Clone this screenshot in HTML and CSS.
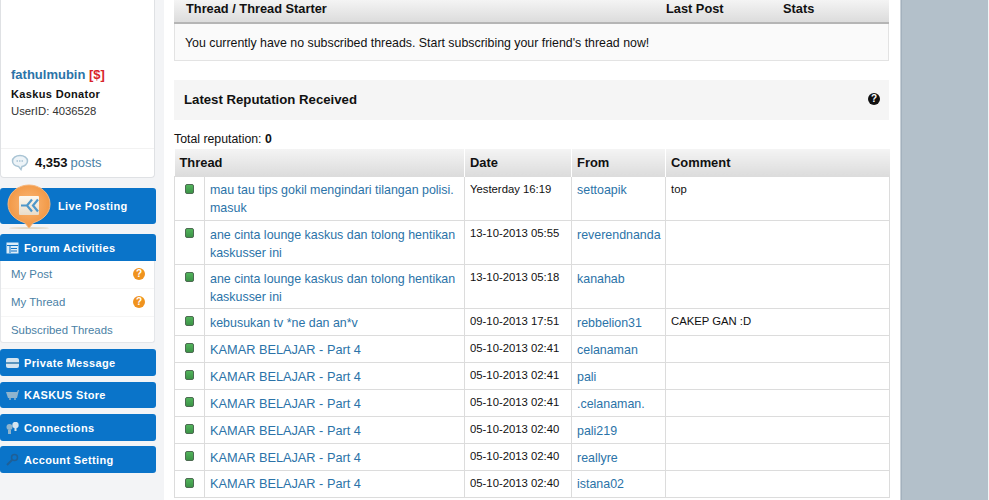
FILE: index.html
```html
<!DOCTYPE html>
<html lang="id">
<head>
<meta charset="utf-8">
<title>Kaskus profile</title>
<link rel="stylesheet" href="styles.css">
</head>
<body>
<div class="page">
  <aside class="side">
    <section class="card">
      <div class="who">
        <div class="name"><a>fathulmubin</a> <span class="don">[$]</span></div>
        <div class="rank">Kaskus Donator</div>
        <div class="uid">UserID: 4036528</div>
      </div>
      <div class="posts">
        <svg class="bubble" width="18" height="17" viewBox="0 0 18 17"><path d="M9 1.500c4.300 0 7.500 2.400 7.500 5.500S13.300 12.500 11 12.500L10 15.500 7.500 12.400C4 12.200 1.500 10 1.500 7 1.500 3.900 4.700 1.500 9 1.500z" fill="#eef4f8" stroke="#a9c4d4" stroke-width="1.500"/><path d="M5.500 7h7" stroke="#a9c4d4" stroke-width="1.500" stroke-dasharray="1.500 1"/></svg>
        <b>4,353</b> <a>posts</a>
      </div>
    </section>

    <a class="live">
      <svg class="pin" width="44" height="48" viewBox="0 0 44 48">
        <defs>
          <radialGradient id="pinfill" cx="50%" cy="45%" r="60%"><stop offset="0" stop-color="#fbb877"/><stop offset="1" stop-color="#f0923c"/></radialGradient>
          <linearGradient id="tile" x1="0" y1="0" x2="0" y2="1"><stop offset="0" stop-color="#fdf8ef"/><stop offset="1" stop-color="#e9dcc9"/></linearGradient>
        </defs>
        <ellipse cx="22" cy="44" rx="20" ry="0.800" fill="#b99558" opacity=".4"/>
        <path d="M22 1C33 1 43 9 43 20 43 30 35 36 27 38.500 25 39.500 24 42 22 44 20 42 19 39.500 17 38.500 9 36 1 30 1 20 1 9 11 1 22 1z" fill="url(#pinfill)" stroke="#f6b77e"/>
        <rect x="12" y="12" width="20" height="19" rx="1" fill="url(#tile)"/>
        <path d="M14 21.500h6M25 15.500l-5 6 5 6M31 15.500l-5 6 5 6" stroke="#4f97c9" stroke-width="2.200" fill="none"/>
      </svg>
      Live Posting
    </a>

    <div class="menu">
      <a class="btn tall">
        <svg class="ico" width="13" height="12" viewBox="0 0 13 12"><rect x="0.500" y="0.500" width="12" height="11" fill="#dcecf7"/><path d="M1 3.500h11M4 4v7M5 6.500h6M5 9h6" stroke="#0f73c6"/></svg>
        Forum Activities
      </a>
      <ul class="sub">
        <li><a>My Post</a><span class="q orange">?</span></li>
        <li><a>My Thread</a><span class="q orange">?</span></li>
        <li><a>Subscribed Threads</a></li>
      </ul>
    </div>

    <a class="btn tall">
      <svg class="ico" width="13" height="10" viewBox="0 0 13 10"><rect width="13" height="10" rx="2" fill="#d5e4ef"/><path d="M0 4h13v2H0z" fill="#5a94bd"/></svg>
      Private Message
    </a>
    <a class="btn">
      <svg class="ico" width="13" height="10" viewBox="0 0 13 10"><path d="M0 2h11l1-2h1L11 8H2z" fill="#8fb4cd"/><circle cx="4" cy="9" r="1" fill="#8fb4cd"/><circle cx="9" cy="9" r="1" fill="#8fb4cd"/></svg>
      KASKUS Store
    </a>
    <a class="btn tall">
      <svg class="ico" width="13" height="12" viewBox="0 0 13 12"><circle cx="3.500" cy="5" r="3" fill="#8fb4cd"/><path d="M2 8h3v4H2z" fill="#8fb4cd"/><circle cx="9.500" cy="3" r="3.200" fill="#d5e4ef"/><path d="M8.500 6h2v3h-2z" fill="#d5e4ef"/></svg>
      Connections
    </a>
    <a class="btn tall last">
      <svg class="ico" width="13" height="13" viewBox="0 0 13 13"><circle cx="8.500" cy="4.500" r="3" fill="none" stroke="#1f5f96" stroke-width="1.500"/><path d="M6 7l-5 5" stroke="#1f5f96" stroke-width="2"/></svg>
      Account Setting
    </a>
  </aside>

  <main class="main">
    <section class="subs">
      <div class="subs-head">
        <span class="c-thread">Thread / Thread Starter</span>
        <span class="c-last">Last Post</span>
        <span>Stats</span>
      </div>
      <div class="subs-body">You currently have no subscribed threads. Start subscribing your friend's thread now!</div>
    </section>

    <h2 class="rep-title"><span>Latest Reputation Received</span><span class="q black">?</span></h2>

    <p class="total">Total reputation: <b>0</b></p>

    <table class="rep">
      <colgroup><col class="w-ic"><col class="w-th"><col class="w-da"><col class="w-fr"><col class="w-co"></colgroup>
      <thead>
        <tr><th colspan="2">Thread</th><th>Date</th><th>From</th><th>Comment</th></tr>
      </thead>
      <tbody>
        <tr class="two"><td class="ic"><i class="dot"></i></td><td class="lnk">mau tau tips gokil mengindari tilangan polisi. masuk</td><td>Yesterday 16:19</td><td class="lnk">settoapik</td><td>top</td></tr>
        <tr class="two"><td class="ic"><i class="dot"></i></td><td class="lnk">ane cinta lounge kaskus dan tolong hentikan kaskusser ini</td><td>13-10-2013 05:55</td><td class="lnk">reverendnanda</td><td></td></tr>
        <tr class="two"><td class="ic"><i class="dot"></i></td><td class="lnk">ane cinta lounge kaskus dan tolong hentikan kaskusser ini</td><td>13-10-2013 05:18</td><td class="lnk">kanahab</td><td></td></tr>
        <tr><td class="ic"><i class="dot"></i></td><td class="lnk">kebusukan tv *ne dan an*v</td><td>09-10-2013 17:51</td><td class="lnk">rebbelion31</td><td>CAKEP GAN :D</td></tr>
        <tr><td class="ic"><i class="dot"></i></td><td class="lnk cap">KAMAR BELAJAR - Part 4</td><td>05-10-2013 02:41</td><td class="lnk">celanaman</td><td></td></tr>
        <tr><td class="ic"><i class="dot"></i></td><td class="lnk cap">KAMAR BELAJAR - Part 4</td><td>05-10-2013 02:41</td><td class="lnk">pali</td><td></td></tr>
        <tr><td class="ic"><i class="dot"></i></td><td class="lnk cap">KAMAR BELAJAR - Part 4</td><td>05-10-2013 02:41</td><td class="lnk">.celanaman.</td><td></td></tr>
        <tr><td class="ic"><i class="dot"></i></td><td class="lnk cap">KAMAR BELAJAR - Part 4</td><td>05-10-2013 02:40</td><td class="lnk">pali219</td><td></td></tr>
        <tr><td class="ic"><i class="dot"></i></td><td class="lnk cap">KAMAR BELAJAR - Part 4</td><td>05-10-2013 02:40</td><td class="lnk">reallyre</td><td></td></tr>
        <tr><td class="ic"><i class="dot"></i></td><td class="lnk cap">KAMAR BELAJAR - Part 4</td><td>05-10-2013 02:40</td><td class="lnk">istana02</td><td></td></tr>
      </tbody>
    </table>
  </main>

  <div class="rail"></div>
</div>
</body>
</html>
```

FILE: styles.css
```css
* { box-sizing: border-box; }
html, body { margin: 0; height: 500px; overflow: hidden; }
body { font-family: "Liberation Sans", Arial, sans-serif; font-size: 12px; color: #111; background: #fff; }
a { color: #2b73a8; }

.page { display: flex; width: 989px; height: 500px; overflow: hidden; }

/* sidebar */
.side { width: 164px; flex: none; background: #f3f4f6; padding-right: 8px; display: flex; flex-direction: column; }
.card { height: 178px; background: #fff; border: 1px solid #dfe1e4; border-top: 0; border-radius: 0 0 4px 4px; display: flex; flex-direction: column; margin-right: 1px; }
.who { height: 149px; padding: 67px 0 0 10px; border-bottom: 1px solid #f2f2f2; }
.name { font-size: 13px; font-weight: bold; line-height: 16px; }
.don { color: #d8232a; }
.rank { font-size: 11px; font-weight: bold; line-height: 15px; margin-top: 4px; letter-spacing: .35px; }
.uid { font-size: 11.300px; line-height: 15px; margin-top: 2px; color: #333; }
.posts { display: flex; align-items: center; padding: 0 0 2px 10px; height: 28px; font-size: 13px; gap: 4px; }
.posts .bubble { margin-right: 2px; }
.posts a { color: #4a7fa5; margin-left: -1px; }

.live { position: relative; display: block; height: 36px; margin: 10px 0 10px; background: #0a74c9; border-radius: 3px; color: #fff; font-size: 11px; font-weight: bold; line-height: 36px; padding-left: 58px; letter-spacing: .35px; }
.pin { position: absolute; left: 7px; top: -4px; }

.menu { margin-bottom: 6px; }
.btn { display: flex; align-items: center; gap: 5px; height: 26px; margin-bottom: 6px; padding-left: 6px; background: #0a74c9; border-radius: 3px; color: #fff; font-size: 11px; font-weight: bold; letter-spacing: .35px; }
.btn.tall { height: 27px; }
.btn.last { margin-top: -1px; height: 27px; }
.menu .btn { margin-bottom: 0; border-radius: 3px 3px 0 0; }
.ico { flex: none; }
.sub { list-style: none; margin: 0 1px 0 0; padding: 0; height: 82px; background: #fff; border: 1px solid #e4e6e9; border-top: 0; border-radius: 0 0 3px 3px; }
.sub li { display: flex; align-items: center; justify-content: space-between; height: 28px; padding: 0 9px 2px 10px; border-bottom: 1px solid #f6f6f6; font-size: 11.400px; }
.sub li:last-child { border-bottom: 0; }
.sub a { color: #4a7fa5; }

.q { width: 12px; height: 12px; border-radius: 50%; color: #fff; font-size: 10px; font-weight: bold; line-height: 12px; text-align: center; flex: none; }
.q.orange { background: #f0931e; }
.q.black { background: #111; }

/* main */
.main { width: 737px; flex: none; padding: 0 11px 0 10px; background: #fff; border-right: 1px solid #c9d1d8; }
.subs-head { display: flex; height: 24px; padding-left: 12px; background: linear-gradient(#f4f4f4, #dcdcdc); border-bottom: 2px solid #b5b5b5; font-size: 12px; font-weight: bold; line-height: 18px; }
.subs-head span { font-size: 12.800px; }
.c-thread { width: 480px; }
.c-last { width: 117px; }
.subs-body { height: 37px; padding: 1px 0 0 10px; background: #fafafa; border: 1px solid #e3e3e3; border-top: 0; line-height: 37px; font-size: 12.370px; }

.rep-title { display: flex; justify-content: space-between; align-items: center; height: 40px; margin: 19px 0 0; padding: 0 9px 2px 10px; background: #f5f5f5; font-size: 13.200px; font-weight: bold; }
.total { margin: 12px 0 0; height: 17px; line-height: 15px; font-size: 12.300px; }

.rep { width: 715px; table-layout: fixed; border-collapse: collapse; }
.w-ic { width: 30px; }
.w-th { width: 260px; }
.w-da { width: 107px; }
.w-fr { width: 94px; }
.w-co { width: 224px; }
.rep th { height: 27px; padding: 0 5px; text-align: left; font-size: 12.900px; font-weight: bold; background: linear-gradient(#f4f4f4, #dcdcdc); border-left: 1px solid #fff; }
.rep th:first-child { border-left: 0; }
.rep td { height: 27px; padding: 5px 4px 0 5px; vertical-align: top; border: 1px solid #dcdcdc; font-size: 11.300px; line-height: 15px; }
.rep tr.two td { height: 44px; }
.rep td.lnk { color: #2b73a8; font-size: 12.430px; line-height: 18px; padding-top: 5px; }
.rep tr:first-child td.lnk, .rep tr:last-child td.lnk { padding-top: 4px; }
.rep td.lnk.cap { font-size: 12.750px; }
.rep td.ic { padding: 7px 0 0 10px; }
.dot { display: block; width: 9px; height: 10px; border-radius: 2px; background: linear-gradient(#52b45c, #3c9347); border: 1px solid #4e6b53; }

.rail { flex: 1; background: #b3c0ca; border-left: 1px solid #a3b1bd; border-right: 1px solid #f3f5f6; }
```
